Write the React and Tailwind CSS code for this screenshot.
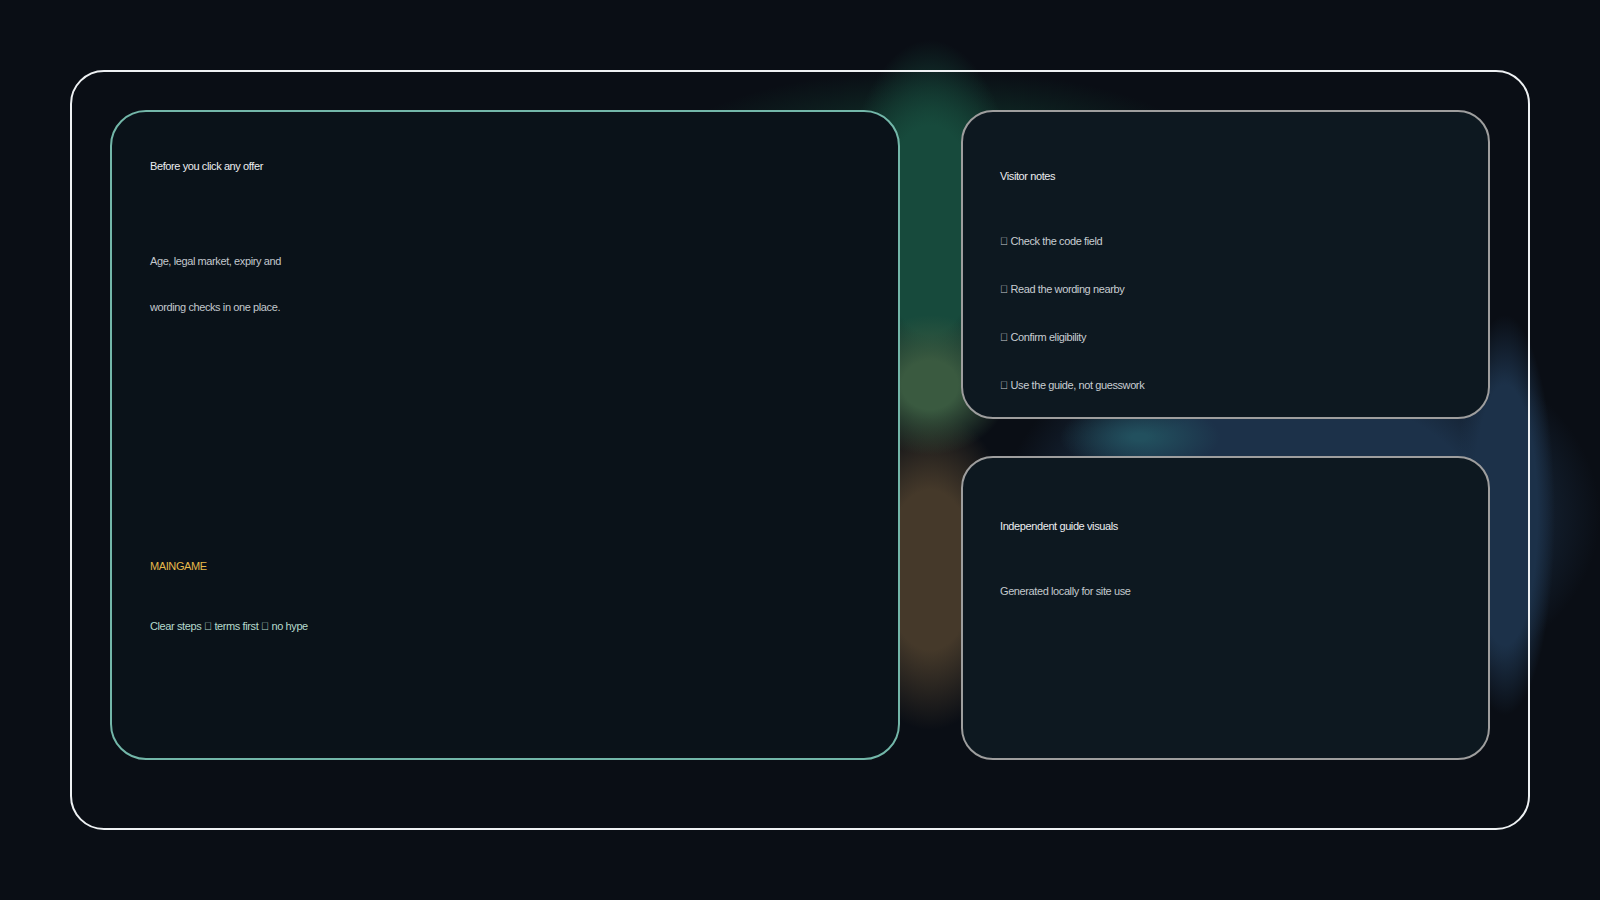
const checks = [
  "Check the code field",
  "Read the wording nearby",
  "Confirm eligibility",
  "Use the guide, not guesswork",
]

// private-use char renders as the font's missing-glyph box, like the reference
const BOX = "\uE000"

export default function App() {
  return (
    <div className="h-[900px] w-full overflow-hidden bg-[#0a0e15] bg-[radial-gradient(80px_35px_at_1140px_437px,#22505e_10%,transparent_100%),radial-gradient(80px_70px_at_930px_385px,#3a5a40_35%,transparent_100%),radial-gradient(90px_160px_at_930px_570px,#45392a_50%,transparent_100%),radial-gradient(90px_190px_at_930px_230px,#174a3c_55%,transparent_100%),radial-gradient(270px_85px_at_935px_155px,#123d30_0%,transparent_100%),radial-gradient(50px_200px_at_1505px_515px,#1c3149_65%,transparent_100%),radial-gradient(300px_200px_at_1300px_515px,#1c3149_60%,transparent_100%)] p-[70px] font-['Liberation_Sans',Arial,sans-serif] text-[11px] leading-4 tracking-[-0.4px]">
      <div className="flex h-[760px] gap-[61px] rounded-[34px] border-2 border-[#eef1f3] px-[38px] pb-[68px] pt-[38px]">
        <div className="w-[790px] shrink-0 rounded-[36px] border-2 border-[#73b7a9] bg-[#0a1219] px-[38px] pt-[46px]">
          <div className="text-[#eceef0]">Before you click any offer</div>
          <p className="mt-[64px] max-w-[155px] leading-[46px] text-[#c3c8cd]">
            Age, legal market, expiry and wording checks in one place.
          </p>
          <div className="mt-[228px] text-[#e6b94b]">MAINGAME</div>
          <div className="mt-[44px] text-[#b6dacd]">
            Clear steps {BOX} terms first {BOX} no hype
          </div>
        </div>

        <div className="flex flex-1 flex-col gap-[37px]">
          <div className="h-[309px] rounded-[32px] border-2 border-[#9e9e9e] bg-[#0d1820] px-[37px] pt-[56px]">
            <div className="text-[#eceef0]">Visitor notes</div>
            <ul className="mt-[49px] flex flex-col gap-8 text-[#c8cdd2]">
              {checks.map((c, i) => (
                <li key={i}>
                  {BOX} {c}
                </li>
              ))}
            </ul>
          </div>
          <div className="flex-1 rounded-[32px] border-2 border-[#9e9e9e] bg-[#0d1820] px-[37px] pt-[60px]">
            <div className="text-[#eceef0]">Independent guide visuals</div>
            <div className="mt-[49px] text-[#c3c8cd]">Generated locally for site use</div>
          </div>
        </div>
      </div>
    </div>
  )
}
